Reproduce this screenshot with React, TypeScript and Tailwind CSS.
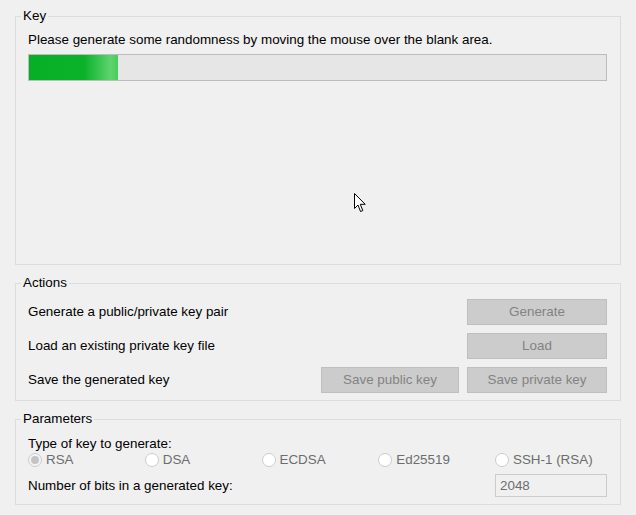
import type { ReactNode } from "react";

function Group({ title, children, className = "" }: { title: string; children: ReactNode; className?: string }) {
  return (
    <fieldset className={`mx-[15px] min-w-0 border border-[#dcdcdc] px-0 ${className}`}>
      <legend className="ml-[5px] px-[2px] leading-4">{title}</legend>
      {children}
    </fieldset>
  );
}

function Button({ label, width = "w-[140px]" }: { label: string; width?: string }) {
  return (
    <div
      className={`flex h-[26px] ${width} items-center justify-center border border-[#bfbfbf] bg-[#cccccc] text-[#838383]`}
    >
      {label}
    </div>
  );
}

function Radio({ label, checked = false, width = "w-[116.75px]" }: { label: string; checked?: boolean; width?: string }) {
  return (
    <div className={`flex ${width} items-center gap-[4px]`}>
      <span
        className={`flex h-[14px] w-[14px] items-center justify-center rounded-full border ${
          checked ? "border-[#cccccc] bg-[#f4f4f4]" : "border-[#cccccc] bg-white"
        }`}
      >
        {checked && <span className="h-[8px] w-[8px] rounded-full bg-[#c4c4c4]" />}
      </span>
      <span className="text-[#6d6d6d]">{label}</span>
    </div>
  );
}

function Cursor() {
  return (
    <svg width="13" height="20" viewBox="0 0 13 20" className="absolute left-[354px] top-[193px]">
      <path
        d="M0.5 0.5 L0.5 15.5 L4 12 L6.5 18.5 L8.8 17.6 L6.3 11.3 L11.2 11.3 Z"
        fill="white"
        stroke="black"
        strokeWidth="1"
        strokeLinejoin="miter"
      />
    </svg>
  );
}

export default function App() {
  return (
    <div className="relative h-[515px] w-[636px] bg-[#f0f0f0] pt-[8px] font-['Liberation_Sans',Arial,sans-serif] text-[13.4px] leading-4 text-black">
      <Group title="Key">
        <div className="px-[12px] pt-[8px]">
          <p>Please generate some randomness by moving the mouse over the blank area.</p>
          <div className="mt-[6px] mr-[1px] h-[27px] border border-[#bcbcbc] bg-[#e6e6e6]">
            <div className="h-full w-[89px] bg-[linear-gradient(to_right,#06b025_0%,#0ab22a_62%,#5fd46f_92%,#48cc5a_100%)]" />
          </div>
          <div className="h-[183px]" />
        </div>
      </Group>

      <Group title="Actions" className="mt-[10px]">
        <div className="flex flex-col gap-[8px] pt-[8px] pb-[7px] pl-[12px] pr-[13px]">
          <div className="flex items-center justify-between">
            <span>Generate a public/private key pair</span>
            <Button label="Generate" />
          </div>
          <div className="flex items-center justify-between">
            <span>Load an existing private key file</span>
            <Button label="Load" />
          </div>
          <div className="flex items-center">
            <span className="flex-1">Save the generated key</span>
            <div className="flex gap-[8px]">
              <Button label="Save public key" width="w-[138px]" />
              <Button label="Save private key" />
            </div>
          </div>
        </div>
      </Group>

      <Group title="Parameters" className="mt-[10px]">
        <div className="pt-[9px] pb-[7px] pl-[12px] pr-[13px]">
          <p>Type of key to generate:</p>
          <div className="flex">
            <Radio label="RSA" checked />
            <Radio label="DSA" />
            <Radio label="ECDSA" />
            <Radio label="Ed25519" />
            <Radio label="SSH-1 (RSA)" width="w-auto" />
          </div>
          <div className="mt-[6px] flex items-center justify-between">
            <span className="pt-[1px]">Number of bits in a generated key:</span>
            <div className="flex h-[23px] w-[112px] items-center border border-[#cccccc] bg-[#f0f0f0] pl-[4px] text-[#6d6d6d]">
              2048
            </div>
          </div>
        </div>
      </Group>

      <Cursor />
    </div>
  );
}
